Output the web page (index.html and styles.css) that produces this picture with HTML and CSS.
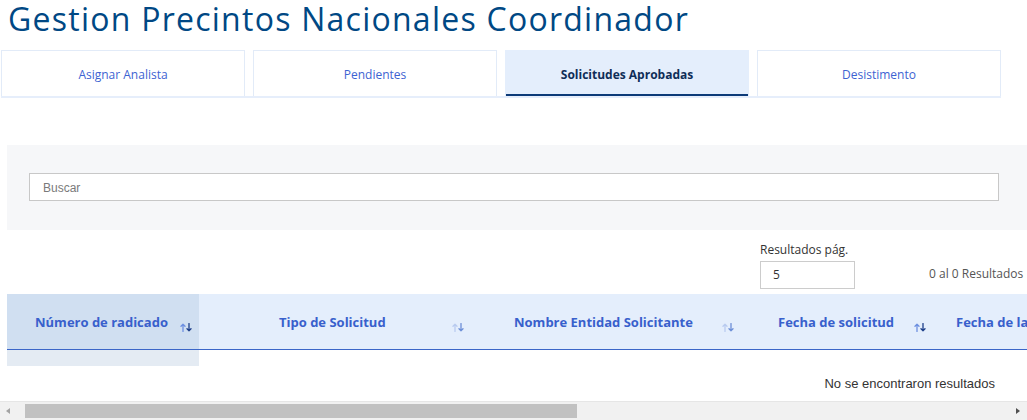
FILE: index.html
```html
<!DOCTYPE html>
<html lang="es">
<head>
<meta charset="utf-8">
<title>Gestion Precintos Nacionales Coordinador</title>
<link rel="stylesheet" href="styles.css">
</head>
<body>
<div class="page">
  <h1 class="title">Gestion Precintos Nacionales Coordinador</h1>
  <nav class="tabs">
    <a class="tab">Asignar Analista</a>
    <a class="tab">Pendientes</a>
    <a class="tab active">Solicitudes Aprobadas</a>
    <a class="tab">Desistimento</a>
  </nav>

  <section class="search-panel">
    <input class="search" type="text" placeholder="Buscar">
  </section>

  <div class="pager">
    <div class="per-page">
      <label class="per-label">Resultados pág.</label>
      <div class="per-select">5</div>
    </div>
    <span class="count">0 al 0 Resultados</span>
  </div>

  <div class="table-wrap">
    <div class="thead">
      <div class="th c1"><span class="lbl">Número de radicado</span><svg class="sort" viewBox="0 0 12 9" width="12" height="9"><path class="up" d="M3 8.5V1.2M1 3.2L3 1.2L5 3.2"/><path class="down" d="M9 0.5V7.8M7 5.8L9 7.8L11 5.8"/></svg></div>
      <div class="th c2"><span class="lbl">Tipo de Solicitud</span><svg class="sort faint" viewBox="0 0 12 9" width="12" height="9"><path class="up" d="M3 8.5V1.2M1 3.2L3 1.2L5 3.2"/><path class="down" d="M9 0.5V7.8M7 5.8L9 7.8L11 5.8"/></svg></div>
      <div class="th c3"><span class="lbl">Nombre Entidad Solicitante</span><svg class="sort faint" viewBox="0 0 12 9" width="12" height="9"><path class="up" d="M3 8.5V1.2M1 3.2L3 1.2L5 3.2"/><path class="down" d="M9 0.5V7.8M7 5.8L9 7.8L11 5.8"/></svg></div>
      <div class="th c4"><span class="lbl">Fecha de solicitud</span><svg class="sort" viewBox="0 0 12 9" width="12" height="9"><path class="up" d="M3 8.5V1.2M1 3.2L3 1.2L5 3.2"/><path class="down" d="M9 0.5V7.8M7 5.8L9 7.8L11 5.8"/></svg></div>
      <div class="th c5"><span class="lbl">Fecha de la aprobación</span></div>
    </div>
    <div class="tbody">
      <div class="td c1"></div>
    </div>
  </div>

  <div class="empty">No se encontraron resultados</div>
</div>
<div class="hscroll">
  <span class="arrow left"></span>
  <div class="track"><div class="thumb"></div></div>
  <span class="arrow right"></span>
</div>
</body>
</html>
```

FILE: styles.css
```css
* { box-sizing: border-box; }

html, body {
  margin: 0;
  padding: 0;
  background: #ffffff;
  width: 1027px;
  height: 420px;
  overflow: hidden;
}

body {
  font-family: "Open Sans", "Noto Sans", sans-serif;
  color: #333333;
}

.page {
  padding-left: 7px;
  height: 401px;
  overflow: hidden;
}

.title {
  margin: 0 0 0 1px;
  font-family: "Open Sans", sans-serif;
  font-weight: 400;
  font-size: 32px;
  line-height: 38px;
  padding-bottom: 2px;
  color: #004884;
  letter-spacing: 1.25px;
  white-space: nowrap;
}

.tabs {
  display: flex;
  gap: 8px;
  margin: 10px 0 0 -6px;
  width: 1000px;
  height: 48px;
  border-bottom: 2px solid #e6eefb;
}

.tab {
  flex: 0 0 244px;
  height: 46px;
  display: flex;
  align-items: center;
  justify-content: center;
  padding-top: 2px;
  border: 1px solid #e2ebf8;
  border-bottom: none;
  font-size: 12px;
  color: #3d63d2;
  cursor: pointer;
}

.tab.active {
  background: #e4eefc;
  border-color: #e4eefc;
  box-shadow: inset 0 -2px 0 #0c3a78;
  color: #0f2d57;
  font-weight: 700;
}

.search-panel {
  margin-top: 47px;
  width: 1040px;
  height: 85px;
  background: #f6f7f9;
  padding: 28px 0 0 22px;
}

.search {
  display: block;
  width: 970px;
  height: 28px;
  border: 1px solid #c8c8c8;
  background: #ffffff;
  padding: 1px 13px 0;
  font-family: "Liberation Sans", Arial, sans-serif;
  font-size: 12px;
  color: #333;
  outline: none;
}

.search::placeholder {
  color: #7a7a7a;
}

.pager {
  display: flex;
  align-items: flex-end;
  height: 64px;
  padding: 0 0 5px 753px;
}

.per-page {
  display: flex;
  flex-direction: column;
  gap: 3px;
}

.per-label {
  font-size: 12px;
  line-height: 16px;
  color: #333333;
}

.per-select {
  width: 95px;
  height: 28px;
  border: 1px solid #cccccc;
  padding-left: 12px;
  font-size: 12px;
  line-height: 26px;
  color: #333333;
}

.count {
  margin-left: 74px;
  font-size: 12px;
  line-height: 16px;
  margin-bottom: 7px;
  color: #555555;
  white-space: nowrap;
}

.table-wrap {
  width: 1100px;
}

.thead {
  display: flex;
  height: 56px;
  background: #e4eefc;
  border-bottom: 1px solid #3b66c8;
}

.th {
  display: flex;
  align-items: center;
  font-family: "Open Sans", sans-serif;
  font-weight: 700;
  font-size: 13px;
  color: #3860cc;
  white-space: nowrap;
}

.th .lbl { display: block; }

.sort {
  margin-top: 12px;
  flex: 0 0 auto;
}
.sort path {
  fill: none;
  stroke-width: 1.3;
  stroke-linecap: round;
  stroke-linejoin: round;
}
.sort .up { stroke: #6d8fe0; }
.sort .down { stroke: #1d3f8a; }
.sort.faint .up { stroke: #b9cbf0; }
.sort.faint .down { stroke: #6d8fd8; }

.c1 { flex: 0 0 192px; padding-left: 28px; }
.c2 { flex: 0 0 275px; padding-left: 80px; }
.c3 { flex: 0 0 270px; padding-left: 40px; }
.c4 { flex: 0 0 196px; padding-left: 34px; }
.c5 { flex: 0 0 200px; padding-left: 16px; }

.th.c1 { background: #d0dff1; }
.c1 .lbl { width: 145px; }
.c2 .lbl { width: 173px; }
.c3 .lbl { width: 208px; }
.c4 .lbl { width: 136px; }

.tbody {
  display: flex;
  height: 16px;
}

.td.c1 {
  background: #e4ebf3;
}

.empty {
  width: 988px;
  text-align: right;
  margin-top: 10px;
  font-family: "Liberation Sans", Arial, sans-serif;
  font-size: 13px;
  line-height: 15px;
  color: #333333;
}

.hscroll {
  display: flex;
  align-items: center;
  height: 19px;
  background: #f1f1f1;
  border-top: 1px solid #e6e6e6;
}

.track {
  flex: 1;
  height: 14px;
  padding-left: 8px;
  display: flex;
}

.thumb {
  width: 552px;
  height: 14px;
  background: #c1c1c1;
}

.arrow {
  flex: 0 0 17px;
  height: 14px;
  position: relative;
}

.arrow::before {
  content: "";
  position: absolute;
  top: 4px;
  width: 0;
  height: 0;
  border-top: 3.5px solid transparent;
  border-bottom: 3.5px solid transparent;
}

.arrow.left::before {
  left: 6px;
  border-right: 4px solid #a3a3a3;
}

.arrow.right::before {
  left: 6px;
  border-left: 4px solid #505050;
}
```
